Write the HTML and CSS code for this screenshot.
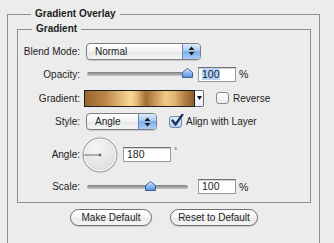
FILE: index.html
```html
<!DOCTYPE html>
<html lang="en">
<head>
    <meta charset="UTF-8">
    <meta name="viewport" content="width=device-width, initial-scale=1.0">
    <title>Gradient Overlay</title>
    <link rel="stylesheet" href="styles.css">
</head>
<body>
    <fieldset class="group outer">
        <legend>Gradient Overlay</legend>

        <fieldset class="group inner">
            <legend>Gradient</legend>

            <div class="row row-blend">
                <span class="lbl">Blend Mode:</span>
                <div class="popup popup-wide">
                    <span class="popup-text">Normal</span>
                    <span class="popup-arrows">
                        <svg width="7" height="10" viewBox="0 0 7 10"><path d="M3.5 0.5 L6.5 4 L0.5 4 Z M0.5 6 L6.5 6 L3.5 9.5 Z" fill="#1b1b1b"/></svg>
                    </span>
                </div>
            </div>

            <div class="row row-opacity">
                <span class="lbl">Opacity:</span>
                <div class="slider">
                    <div class="track"></div>
                    <svg class="thumb" style="left: 95px" width="11" height="10" viewBox="0 0 11 10"><defs><linearGradient id="tb1" x1="0" y1="0" x2="0" y2="1"><stop offset="0" stop-color="#e4f0fd"/><stop offset="0.5" stop-color="#8ebcf0"/><stop offset="1" stop-color="#4f8fde"/></linearGradient></defs><path d="M0.5 4.5 L5.5 0.5 L10.5 4.5 L10.5 9.5 L0.5 9.5 Z" fill="url(#tb1)" stroke="#3d5f92"/></svg>
                </div>
                <div class="field field-pct"><span class="selected">100</span></div>
                <span class="unit">%</span>
            </div>

            <div class="row row-gradient">
                <span class="lbl">Gradient:</span>
                <div class="swatch"></div>
                <div class="swatch-drop">
                    <svg width="5" height="4" viewBox="0 0 5 4"><path d="M0 0 L5 0 L2.5 4 Z" fill="#111"/></svg>
                </div>
                <span class="check"></span>
                <span class="check-text">Reverse</span>
            </div>

            <div class="row row-style">
                <span class="lbl">Style:</span>
                <div class="popup popup-short">
                    <span class="popup-text">Angle</span>
                    <span class="popup-arrows">
                        <svg width="7" height="10" viewBox="0 0 7 10"><path d="M3.5 0.5 L6.5 4 L0.5 4 Z M0.5 6 L6.5 6 L3.5 9.5 Z" fill="#1b1b1b"/></svg>
                    </span>
                </div>
                <span class="check checked">
                    <svg width="14" height="14" viewBox="0 0 14 14"><path d="M2.5 6.5 L5.5 10.5 L12.5 0.5" fill="none" stroke="#1d2f57" stroke-width="2.2" stroke-linecap="round" stroke-linejoin="round"/></svg>
                </span>
                <span class="check-text">Align with Layer</span>
            </div>

            <div class="row row-angle">
                <span class="lbl">Angle:</span>
                <div class="dial">
                    <svg width="36" height="36" viewBox="0 0 36 36"><defs><radialGradient id="dl" cx="0.4" cy="0.3" r="0.8"><stop offset="0" stop-color="#f7f7f7"/><stop offset="1" stop-color="#d9d9d9"/></radialGradient></defs><circle cx="18" cy="18" r="17" fill="url(#dl)" stroke="#8d8d8d"/><circle cx="18" cy="18" r="16" fill="none" stroke="#fbfbfb" stroke-width="0.8"/><line x1="1.5" y1="18" x2="18" y2="18" stroke="#6e6e6e" stroke-width="1"/><circle cx="18" cy="18" r="1.4" fill="#6e6e6e"/></svg>
                </div>
                <div class="field field-angle">180</div>
                <span class="degree">°</span>
            </div>

            <div class="row row-scale">
                <span class="lbl">Scale:</span>
                <div class="slider">
                    <div class="track"></div>
                    <svg class="thumb" style="left: 58px" width="11" height="10" viewBox="0 0 11 10"><defs><linearGradient id="tb2" x1="0" y1="0" x2="0" y2="1"><stop offset="0" stop-color="#e4f0fd"/><stop offset="0.5" stop-color="#8ebcf0"/><stop offset="1" stop-color="#4f8fde"/></linearGradient></defs><path d="M0.5 4.5 L5.5 0.5 L10.5 4.5 L10.5 9.5 L0.5 9.5 Z" fill="url(#tb2)" stroke="#3d5f92"/></svg>
                </div>
                <div class="field field-pct">100</div>
                <span class="unit">%</span>
            </div>
        </fieldset>

        <div class="buttons">
            <button class="btn btn-make">Make Default</button>
            <button class="btn btn-reset">Reset to Default</button>
        </div>
    </fieldset>
</body>
</html>
```

FILE: styles.css
```css
body {
    margin: 0;
    background: #ececec;
    font-family: 'Liberation Sans', Arial, sans-serif;
    font-size: 10px;
    color: #1c1c1c;
    height: 243px;
    overflow: hidden;
}
.group {
    margin: 0;
    padding: 0;
    border: 1px solid #8e8e8e;
    min-width: 0;
}
.group legend {
    font-weight: bold;
    line-height: 12px;
    padding: 0 4px;
}
.outer {
    margin: 8px 0 0 7px;
    width: 313px;
    height: 240px;
    box-sizing: border-box;
    padding: 0 8px 0 9px;
}
.outer > legend {
    margin-left: 14px;
}
.inner {
    margin-top: 3px;
    padding: 5px 0 5px 0;
}
.inner > legend {
    margin-left: 14px;
}
.row {
    display: flex;
    align-items: center;
}
.lbl {
    width: 62px;
    text-align: right;
    margin-right: 6px;
    flex: none;
}
.row-blend { height: 22px; }
.row-opacity { height: 24px; }
.row-gradient { height: 24px; }
.row-style { height: 23px; }
.row-angle { height: 43px; }
.row-scale { height: 21px; }

/* popup menus */
.popup {
    height: 17px;
    box-sizing: border-box;
    border: 1px solid #7d7d7d;
    border-radius: 4px;
    background: linear-gradient(#ffffff, #f3f3f3 50%, #e6e6e6 51%, #f7f7f7);
    display: flex;
    overflow: hidden;
    box-shadow: 0 1px 1px rgba(0,0,0,0.15);
}
.popup-wide { width: 115px; }
.popup-short { width: 71px; }
.popup-text {
    flex: 1;
    padding-left: 8px;
    line-height: 15px;
}
.popup-arrows {
    width: 17px;
    border-left: 1px solid #6d89b8;
    background: linear-gradient(#dcebfc, #a9cbf3 45%, #7fb0ea 50%, #a6cdf6 100%);
    display: flex;
    align-items: center;
    justify-content: center;
}

/* sliders */
.slider {
    position: relative;
    width: 101px;
    height: 10px;
    margin-left: 1px;
    margin-right: 10px;
}
.track {
    position: absolute;
    left: 0;
    right: 0;
    top: 3px;
    height: 4px;
    border-radius: 2px;
    background: linear-gradient(#7e7e7e, #a9a9a9 60%, #c9c9c9);
}
.thumb {
    position: absolute;
    top: -1px;
}

/* text fields */
.field {
    height: 15px;
    box-sizing: border-box;
    background: #fff;
    border: 1px solid #9a9a9a;
    border-top-color: #6f6f6f;
    box-shadow: inset 0 1px 0 #d4d4d4;
    padding-left: 3px;
    line-height: 13px;
    font-size: 10.5px;
}
.field-pct { width: 38px; }
.field-angle { width: 48px; margin-left: 5px; }
.selected {
    background: #b5d5ff;
}
.unit {
    margin-left: 3px;
    font-size: 10.5px;
}
.degree {
    align-self: flex-start;
    margin-top: 13px;
    margin-left: 3px;
    font-size: 8px;
}

/* gradient swatch */
.swatch {
    width: 111px;
    height: 17px;
    box-sizing: border-box;
    margin-left: -2px;
    border: 1px solid #1e1e1e;
    background: linear-gradient(90deg, #9a6631 0%, #b98446 18%, #e8be7c 34%, #fbd896 42%, #e3b672 48%, #a46e36 56%, #c79658 64%, #f1c985 74%, #e1b473 82%, #b17d42 92%, #8f5d2b 100%);
}
.swatch-drop {
    width: 9px;
    height: 17px;
    box-sizing: border-box;
    border: 1px solid #6b6b6b;
    border-left: none;
    border-radius: 0 2px 2px 0;
    background: linear-gradient(#ffffff, #e9eef6);
    display: flex;
    align-items: center;
    justify-content: center;
}

/* checkboxes */
.check {
    width: 13px;
    height: 12px;
    box-sizing: border-box;
    margin-left: 12px;
    border: 1px solid #8a8a8a;
    border-radius: 3px;
    background: linear-gradient(#ffffff, #ececec);
    position: relative;
    flex: none;
}
.checked {
    border-color: #6f87ad;
    background: linear-gradient(#e3eefb, #b5d1f2);
}
.checked svg {
    position: absolute;
    left: 0;
    top: -3px;
}
.check-text {
    margin-left: 4px;
}

/* dial */
.dial {
    width: 36px;
    height: 36px;
    margin-left: -4px;
}
.dial svg {
    display: block;
}

/* buttons */
.buttons {
    display: flex;
    justify-content: center;
    gap: 18px;
    margin-top: 6px;
}
.btn {
    height: 17px;
    padding: 0;
    border: 1px solid #6e6e6e;
    border-radius: 9px;
    background: linear-gradient(#ffffff, #f4f4f4 50%, #e8e8e8 51%, #f6f6f6);
    font-family: 'Liberation Sans', Arial, sans-serif;
    font-size: 10px;
    color: #1c1c1c;
    box-shadow: 0 1px 1px rgba(0,0,0,0.15);
}
.btn-make { width: 82px; }
.btn-reset { width: 88px; }
```
